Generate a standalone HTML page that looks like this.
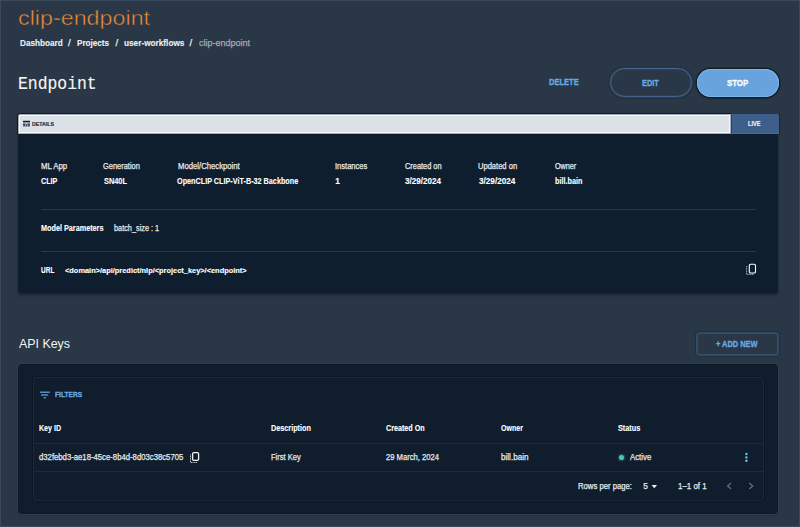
<!DOCTYPE html><html><head><meta charset="utf-8"><title>clip-endpoint</title><style>

*{margin:0;padding:0;box-sizing:border-box}
html,body{width:800px;height:527px;overflow:hidden}
body{background:#293746;position:relative;font-family:"Liberation Sans",sans-serif}
#frame{position:absolute;left:0;top:0;width:800px;height:527px;border:1px solid #3b4a5a;z-index:50;pointer-events:none}
.t{position:absolute;white-space:nowrap;transform-origin:0 0;z-index:10}
.abs{position:absolute}

</style></head><body>

<div id="frame"></div>
<!-- EDIT / STOP buttons -->
<div class="abs" style="left:610px;top:68px;width:82px;height:29px;border:1px solid #42638a;border-radius:15px;box-shadow:0 0 0 0.6px rgba(62,94,128,.7),0 0 0 1.6px rgba(22,30,40,.45),inset 0 0 0 0.6px rgba(62,94,128,.5)"></div>
<div class="abs" style="left:696.7px;top:68.5px;width:82px;height:28.5px;background:#68a3de;border-radius:15px;box-shadow:inset 0 0 0 1px #76b4ec,0 0 0 1.5px #151e29,0 1px 3px rgba(0,0,0,.3)"></div>
<!-- details card -->
<div class="abs" style="left:18px;top:114px;width:760px;height:179px;border-radius:3px;box-shadow:0 2px 3px rgba(0,0,0,.35);background:#0f1e2e"></div>
<div class="abs" style="left:17px;top:113px;width:715px;height:22px;background:#dce1e8;border:1px solid #0f1a28;border-right-color:#1f4080;border-top-left-radius:3px;box-shadow:inset 0 0 0 1px #a2abb6,inset 0 0 0 2px #f6f9fc"></div>
<div class="abs" style="left:732px;top:114px;width:46.5px;height:20px;background:#3e5e8b;border-bottom:1px solid #4a6b9a;border-top-right-radius:2px;box-shadow:1px 0 1px rgba(0,0,0,.25)"></div>
<div class="abs" style="left:41px;top:209px;width:715px;height:1px;background:#2a3747"></div>
<div class="abs" style="left:41px;top:251px;width:715px;height:1px;background:#2a3747"></div>
<!-- details icon -->
<svg class="abs" style="left:22px;top:120px" width="9" height="7" viewBox="22 120 9 7">
 <rect x="23" y="120.8" width="7" height="1.5" fill="#0d1824"/>
 <rect x="23" y="122.3" width="7" height="4.2" fill="#8a929d"/>
 <rect x="23.2" y="123.8" width="1.8" height="2.5" fill="#454e5b"/>
 <rect x="26" y="124.2" width="1.1" height="2.1" fill="#454e5b"/>
 <rect x="28" y="123.8" width="1.8" height="2.5" fill="#454e5b"/>
 <rect x="26" y="122.8" width="1.1" height="1.1" fill="#e4e8ee"/>
</svg>
<!-- copy icon details -->
<svg class="abs" style="left:745px;top:263px" width="13" height="13" viewBox="0 0 13 13">
 <rect x="4.3" y="1.2" width="6.2" height="8.8" rx="1.3" fill="none" stroke="#ffffff" stroke-width="1.1"/>
 <path d="M1.6 3 V11.4 H9" fill="none" stroke="#a3abb4" stroke-width="1" stroke-dasharray="1.2 0.5"/>
</svg>
<!-- API keys -->
<div class="abs" style="left:696px;top:332px;width:83px;height:24px;border:2px solid #314c68;border-radius:4px;box-shadow:0 0 0 1px rgba(22,30,40,.4)"></div>
<div class="abs" style="left:18px;top:364px;width:760px;height:150px;background:#0f1d2d;border:1px solid #0c1827;border-radius:4px;box-shadow:0 0 0 1px #313e4c,0 1px 2px rgba(0,0,0,.3)"></div>
<div class="abs" style="left:33px;top:377px;width:731px;height:124px;border:1px solid #1d2936;border-radius:3px;box-shadow:0 0 0 1px rgba(8,16,28,.5)"></div>
<div class="abs" style="left:34px;top:443px;width:729px;height:1px;background:#1f2b39"></div>
<div class="abs" style="left:34px;top:471px;width:729px;height:1px;background:#1f2b39"></div>
<!-- filter icon -->
<svg class="abs" style="left:38px;top:390px" width="14" height="10" viewBox="0 0 14 10">
 <rect x="1.9" y="1.6" width="9.9" height="1.2" fill="#6aa9e2"/>
 <rect x="3" y="4.4" width="7.2" height="1.2" fill="#6aa9e2"/>
 <rect x="5.7" y="7.1" width="2.3" height="1.2" fill="#6aa9e2"/>
</svg>
<!-- row copy icon -->
<svg class="abs" style="left:189px;top:451px" width="12" height="13" viewBox="0 0 12 13">
 <rect x="3.6" y="1.7" width="6" height="7.6" rx="1.3" fill="none" stroke="#f4f6f8" stroke-width="1.3"/>
 <path d="M1.5 3.3 V11.5 H8" fill="none" stroke="#b4bcc4" stroke-width="1" stroke-dasharray="1.2 0.5"/>
</svg>
<!-- status dot -->
<div class="abs" style="left:619px;top:455px;width:5.4px;height:5.4px;border-radius:50%;background:#4cc7b4;box-shadow:0 0 2px 1px rgba(76,199,180,.35)"></div>
<!-- kebab -->
<svg class="abs" style="left:743px;top:451px" width="7" height="13" viewBox="743 451 7 13">
 <circle cx="746.4" cy="454" r="1.2" fill="#74bdf0"/><circle cx="746.4" cy="457.4" r="1.2" fill="#74bdf0"/><circle cx="746.4" cy="460.8" r="1.2" fill="#74bdf0"/>
</svg>
<!-- rows-per-page triangle -->
<svg class="abs" style="left:650px;top:484px" width="9" height="6" viewBox="650 484 9 6"><path d="M651.6 485 H657 L654.3 488.3 Z" fill="#eef0f2"/></svg>
<!-- chevrons -->
<svg class="abs" style="left:725px;top:481px" width="9" height="10" viewBox="725 481 9 10"><path d="M731.2 483 L727.6 486 L731.2 489" fill="none" stroke="#65717f" stroke-width="1.2"/></svg>
<svg class="abs" style="left:747px;top:481px" width="9" height="10" viewBox="747 481 9 10"><path d="M749.2 483 L752.8 486 L749.2 489" fill="none" stroke="#65717f" stroke-width="1.2"/></svg>

<div class="t" id="t0" style="left:18.44px;top:7.68px;font-family:'Liberation Sans';font-size:20.50px;line-height:20.50px;font-weight:400;color:#ee8b3b;-webkit-text-stroke:0.45px #293746;transform:scaleX(1.1361)">clip-endpoint</div>
<div class="t" id="t1" style="left:19.82px;top:38.04px;font-family:'Liberation Sans';font-size:9.60px;line-height:9.60px;font-weight:700;color:#eef0f2;-webkit-text-stroke:0.12px #eef0f2;transform:scaleX(0.8540)">Dashboard</div>
<div class="t" id="t2" style="left:67.92px;top:38.04px;font-family:'Liberation Sans';font-size:9.60px;line-height:9.60px;font-weight:400;color:#eef0f2;-webkit-text-stroke:0.25px #eef0f2">/</div>
<div class="t" id="t3" style="left:76.83px;top:38.04px;font-family:'Liberation Sans';font-size:9.60px;line-height:9.60px;font-weight:700;color:#eef0f2;-webkit-text-stroke:0.12px #eef0f2;transform:scaleX(0.8481)">Projects</div>
<div class="t" id="t4" style="left:115.42px;top:38.04px;font-family:'Liberation Sans';font-size:9.60px;line-height:9.60px;font-weight:400;color:#eef0f2;-webkit-text-stroke:0.25px #eef0f2">/</div>
<div class="t" id="t5" style="left:123.91px;top:38.04px;font-family:'Liberation Sans';font-size:9.60px;line-height:9.60px;font-weight:700;color:#eef0f2;-webkit-text-stroke:0.12px #eef0f2;transform:scaleX(0.8587)">user-workflows</div>
<div class="t" id="t6" style="left:189.42px;top:38.04px;font-family:'Liberation Sans';font-size:9.60px;line-height:9.60px;font-weight:400;color:#eef0f2;-webkit-text-stroke:0.25px #eef0f2">/</div>
<div class="t" id="t7" style="left:199.26px;top:38.04px;font-family:'Liberation Sans';font-size:9.60px;line-height:9.60px;font-weight:400;color:#a3abb5;-webkit-text-stroke:0.25px #a3abb5;transform:scaleX(0.9373)">clip-endpoint</div>
<div class="t" id="t8" style="left:18.23px;top:75.70px;font-family:'Liberation Mono';font-size:17.50px;line-height:17.50px;font-weight:400;color:#f4f5f6;-webkit-text-stroke:0.15px #f4f5f6;transform:scaleX(0.9361)">Endpoint</div>
<div class="t" id="t9" style="left:548.55px;top:78.02px;font-family:'Liberation Sans';font-size:8.80px;line-height:8.80px;font-weight:700;color:#6aa9e2;-webkit-text-stroke:0.3px #6aa9e2;transform:scaleX(0.8541)">DELETE</div>
<div class="t" id="t10" style="left:642.17px;top:79.12px;font-family:'Liberation Sans';font-size:8.80px;line-height:8.80px;font-weight:700;color:#6aa9e2;-webkit-text-stroke:0.3px #6aa9e2;transform:scaleX(0.8363)">EDIT</div>
<div class="t" id="t11" style="left:727.14px;top:79.12px;font-family:'Liberation Sans';font-size:8.80px;line-height:8.80px;font-weight:700;color:#ffffff;-webkit-text-stroke:0.3px #ffffff;transform:scaleX(0.8878)">STOP</div>
<div class="t" id="t12" style="left:32.39px;top:121.58px;font-family:'Liberation Sans';font-size:5.90px;line-height:5.90px;font-weight:700;color:#28313c;-webkit-text-stroke:0.2px #28313c;transform:scaleX(0.8844)">DETAILS</div>
<div class="t" id="t13" style="left:747.53px;top:120.74px;font-family:'Liberation Sans';font-size:6.30px;line-height:6.30px;font-weight:700;color:#f2f4f8;-webkit-text-stroke:0.12px #f2f4f8;transform:scaleX(0.8857)">LIVE</div>
<div class="t" id="t14" style="left:41.07px;top:161.69px;font-family:'Liberation Sans';font-size:8.30px;line-height:8.30px;font-weight:400;color:#e6e9ec;-webkit-text-stroke:0.25px #e6e9ec;transform:scaleX(0.9404)">ML App</div>
<div class="t" id="t15" style="left:103.00px;top:161.69px;font-family:'Liberation Sans';font-size:8.30px;line-height:8.30px;font-weight:400;color:#e6e9ec;-webkit-text-stroke:0.25px #e6e9ec;transform:scaleX(0.8966)">Generation</div>
<div class="t" id="t16" style="left:177.98px;top:161.69px;font-family:'Liberation Sans';font-size:8.30px;line-height:8.30px;font-weight:400;color:#e6e9ec;-webkit-text-stroke:0.25px #e6e9ec;transform:scaleX(0.9290)">Model/Checkpoint</div>
<div class="t" id="t17" style="left:335.41px;top:161.69px;font-family:'Liberation Sans';font-size:8.30px;line-height:8.30px;font-weight:400;color:#e6e9ec;-webkit-text-stroke:0.25px #e6e9ec;transform:scaleX(0.9074)">Instances</div>
<div class="t" id="t18" style="left:404.55px;top:161.69px;font-family:'Liberation Sans';font-size:8.30px;line-height:8.30px;font-weight:400;color:#e6e9ec;-webkit-text-stroke:0.25px #e6e9ec;transform:scaleX(0.8915)">Created on</div>
<div class="t" id="t19" style="left:478.46px;top:161.69px;font-family:'Liberation Sans';font-size:8.30px;line-height:8.30px;font-weight:400;color:#e6e9ec;-webkit-text-stroke:0.25px #e6e9ec;transform:scaleX(0.9109)">Updated on</div>
<div class="t" id="t20" style="left:554.57px;top:161.69px;font-family:'Liberation Sans';font-size:8.30px;line-height:8.30px;font-weight:400;color:#e6e9ec;-webkit-text-stroke:0.25px #e6e9ec;transform:scaleX(0.8679)">Owner</div>
<div class="t" id="t21" style="left:40.99px;top:176.54px;font-family:'Liberation Sans';font-size:8.30px;line-height:8.30px;font-weight:700;color:#ffffff;-webkit-text-stroke:0.12px #ffffff;transform:scaleX(0.8677)">CLIP</div>
<div class="t" id="t22" style="left:103.98px;top:176.54px;font-family:'Liberation Sans';font-size:8.30px;line-height:8.30px;font-weight:700;color:#ffffff;-webkit-text-stroke:0.12px #ffffff;transform:scaleX(0.8906)">SN40L</div>
<div class="t" id="t23" style="left:177.00px;top:176.54px;font-family:'Liberation Sans';font-size:8.30px;line-height:8.30px;font-weight:700;color:#ffffff;-webkit-text-stroke:0.12px #ffffff;transform:scaleX(0.8724)">OpenCLIP CLIP-ViT-B-32 Backbone</div>
<div class="t" id="t24" style="left:335.28px;top:176.54px;font-family:'Liberation Sans';font-size:8.30px;line-height:8.30px;font-weight:700;color:#ffffff;-webkit-text-stroke:0.12px #ffffff">1</div>
<div class="t" id="t25" style="left:405.19px;top:176.54px;font-family:'Liberation Sans';font-size:8.30px;line-height:8.30px;font-weight:700;color:#ffffff;-webkit-text-stroke:0.12px #ffffff;transform:scaleX(0.9720)">3/29/2024</div>
<div class="t" id="t26" style="left:478.73px;top:176.54px;font-family:'Liberation Sans';font-size:8.30px;line-height:8.30px;font-weight:700;color:#ffffff;-webkit-text-stroke:0.12px #ffffff;transform:scaleX(0.9854)">3/29/2024</div>
<div class="t" id="t27" style="left:554.56px;top:176.54px;font-family:'Liberation Sans';font-size:8.30px;line-height:8.30px;font-weight:700;color:#ffffff;-webkit-text-stroke:0.12px #ffffff;transform:scaleX(0.8752)">bill.bain</div>
<div class="t" id="t28" style="left:41.23px;top:223.94px;font-family:'Liberation Sans';font-size:8.30px;line-height:8.30px;font-weight:700;color:#ffffff;-webkit-text-stroke:0.12px #ffffff;transform:scaleX(0.8741)">Model Parameters</div>
<div class="t" id="t29" style="left:113.87px;top:223.94px;font-family:'Liberation Sans';font-size:8.30px;line-height:8.30px;font-weight:400;color:#e6e9ec;-webkit-text-stroke:0.25px #e6e9ec;transform:scaleX(0.8821)">batch_size : 1</div>
<div class="t" id="t30" style="left:40.96px;top:265.94px;font-family:'Liberation Sans';font-size:8.30px;line-height:8.30px;font-weight:700;color:#ffffff;-webkit-text-stroke:0.12px #ffffff;transform:scaleX(0.7851)">URL</div>
<div class="t" id="t31" style="left:65.16px;top:266.54px;font-family:'Liberation Sans';font-size:7.60px;line-height:7.60px;font-weight:700;color:#ffffff;-webkit-text-stroke:0.12px #ffffff;transform:scaleX(0.9758)">&lt;domain&gt;/api/predict/nlp/&lt;project_key&gt;/&lt;endpoint&gt;</div>
<div class="t" id="t32" style="left:18.54px;top:337.45px;font-family:'Liberation Sans';font-size:13.00px;line-height:13.00px;font-weight:400;color:#f2f4f6;transform:scaleX(0.9540)">API Keys</div>
<div class="t" id="t33" style="left:716.01px;top:341.03px;font-family:'Liberation Sans';font-size:8.20px;line-height:8.20px;font-weight:700;color:#6aa9e2;-webkit-text-stroke:0.3px #6aa9e2;transform:scaleX(0.9045)">+ ADD NEW</div>
<div class="t" id="t34" style="left:55.03px;top:390.87px;font-family:'Liberation Sans';font-size:7.80px;line-height:7.80px;font-weight:700;color:#6aa9e2;-webkit-text-stroke:0.3px #6aa9e2;transform:scaleX(0.8504)">FILTERS</div>
<div class="t" id="t35" style="left:39.19px;top:423.59px;font-family:'Liberation Sans';font-size:8.30px;line-height:8.30px;font-weight:700;color:#ffffff;-webkit-text-stroke:0.12px #ffffff;transform:scaleX(0.8523)">Key ID</div>
<div class="t" id="t36" style="left:270.79px;top:423.59px;font-family:'Liberation Sans';font-size:8.30px;line-height:8.30px;font-weight:700;color:#ffffff;-webkit-text-stroke:0.12px #ffffff;transform:scaleX(0.8744)">Description</div>
<div class="t" id="t37" style="left:386.28px;top:423.59px;font-family:'Liberation Sans';font-size:8.30px;line-height:8.30px;font-weight:700;color:#ffffff;-webkit-text-stroke:0.12px #ffffff;transform:scaleX(0.8646)">Created On</div>
<div class="t" id="t38" style="left:501.46px;top:423.59px;font-family:'Liberation Sans';font-size:8.30px;line-height:8.30px;font-weight:700;color:#ffffff;-webkit-text-stroke:0.12px #ffffff;transform:scaleX(0.8473)">Owner</div>
<div class="t" id="t39" style="left:617.56px;top:423.59px;font-family:'Liberation Sans';font-size:8.30px;line-height:8.30px;font-weight:700;color:#ffffff;-webkit-text-stroke:0.12px #ffffff;transform:scaleX(0.8800)">Status</div>
<div class="t" id="t40" style="left:39.27px;top:453.30px;font-family:'Liberation Sans';font-size:8.30px;line-height:8.30px;font-weight:400;color:#e6e9ec;-webkit-text-stroke:0.25px #e6e9ec;transform:scaleX(0.9307)">d32febd3-ae18-45ce-8b4d-8d03c38c5705</div>
<div class="t" id="t41" style="left:270.97px;top:453.30px;font-family:'Liberation Sans';font-size:8.30px;line-height:8.30px;font-weight:400;color:#e6e9ec;-webkit-text-stroke:0.25px #e6e9ec;transform:scaleX(0.9100)">First Key</div>
<div class="t" id="t42" style="left:386.26px;top:453.30px;font-family:'Liberation Sans';font-size:8.30px;line-height:8.30px;font-weight:400;color:#e6e9ec;-webkit-text-stroke:0.25px #e6e9ec;transform:scaleX(0.9186)">29 March, 2024</div>
<div class="t" id="t43" style="left:501.41px;top:453.30px;font-family:'Liberation Sans';font-size:8.30px;line-height:8.30px;font-weight:400;color:#e6e9ec;-webkit-text-stroke:0.25px #e6e9ec;transform:scaleX(0.9763)">bill.bain</div>
<div class="t" id="t44" style="left:630.04px;top:453.30px;font-family:'Liberation Sans';font-size:8.30px;line-height:8.30px;font-weight:400;color:#e6e9ec;-webkit-text-stroke:0.25px #e6e9ec;transform:scaleX(0.9397)">Active</div>
<div class="t" id="t45" style="left:577.97px;top:482.19px;font-family:'Liberation Sans';font-size:8.30px;line-height:8.30px;font-weight:400;color:#e6e9ec;-webkit-text-stroke:0.25px #e6e9ec;transform:scaleX(0.9282)">Rows per page:</div>
<div class="t" id="t46" style="left:643.17px;top:482.19px;font-family:'Liberation Sans';font-size:8.30px;line-height:8.30px;font-weight:400;color:#e6e9ec;-webkit-text-stroke:0.25px #e6e9ec">5</div>
<div class="t" id="t47" style="left:678.17px;top:482.19px;font-family:'Liberation Sans';font-size:8.30px;line-height:8.30px;font-weight:400;color:#e6e9ec;-webkit-text-stroke:0.25px #e6e9ec;transform:scaleX(0.9533)">1–1 of 1</div>
</body></html>
